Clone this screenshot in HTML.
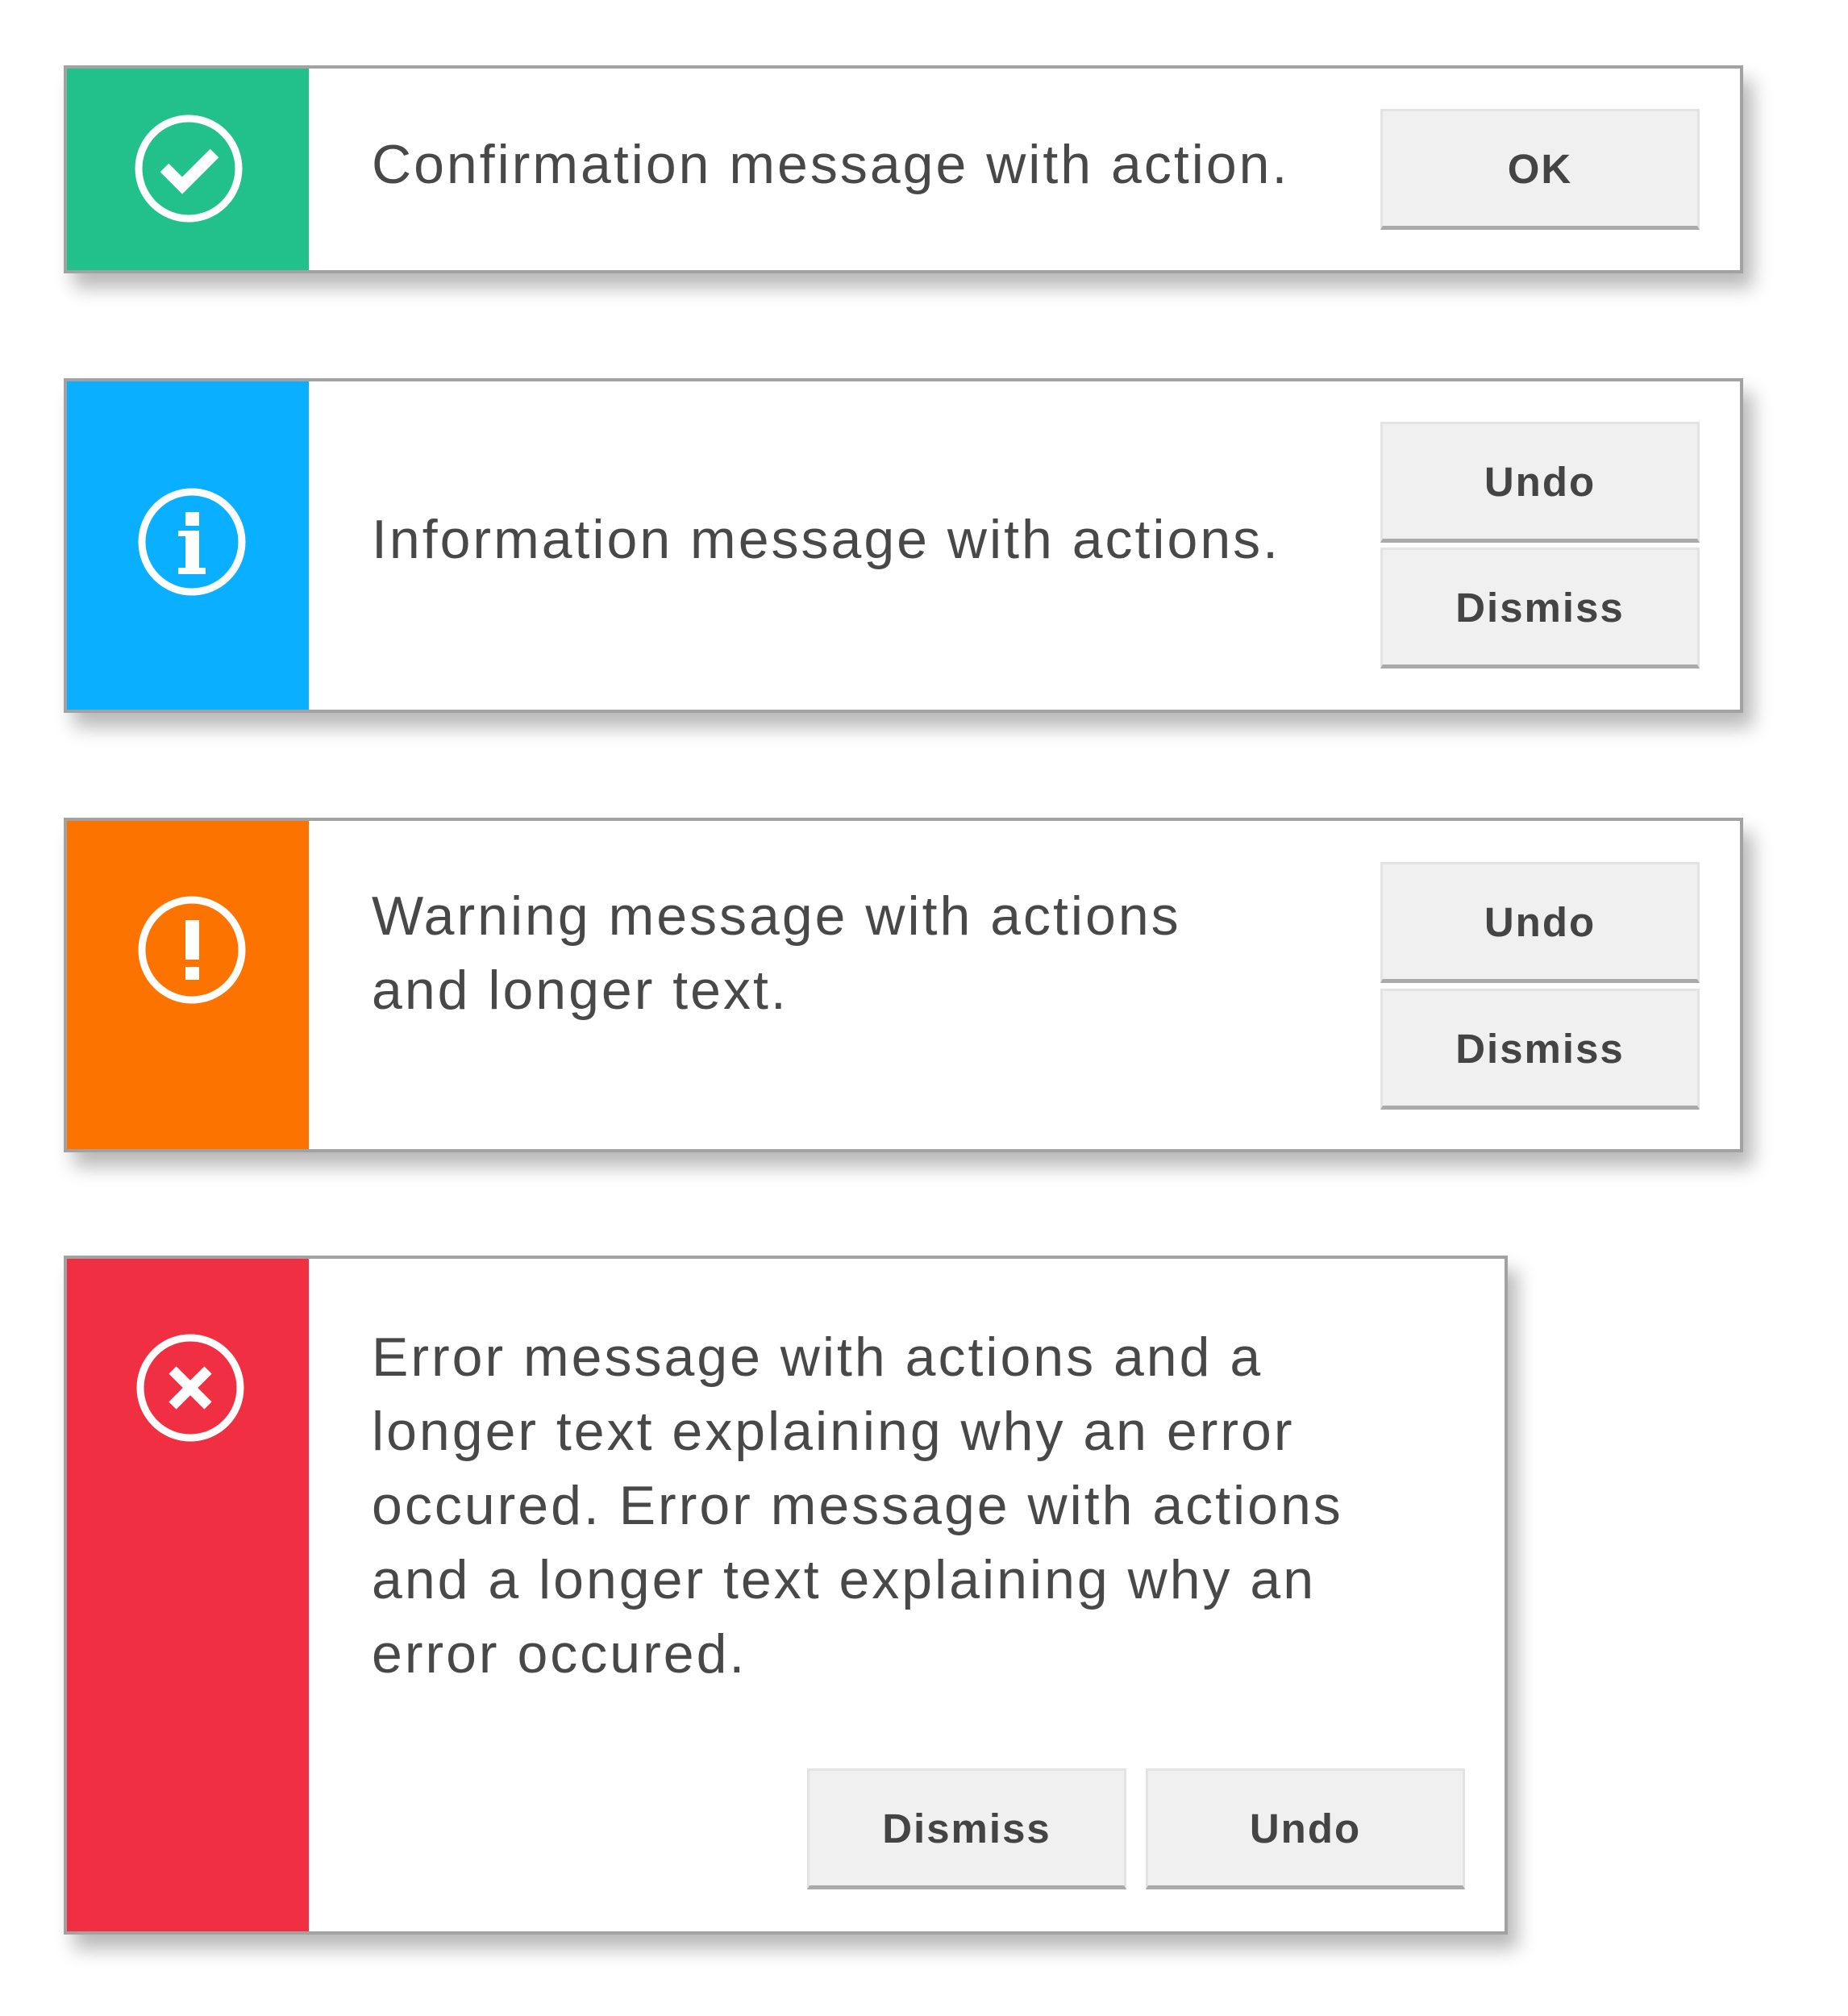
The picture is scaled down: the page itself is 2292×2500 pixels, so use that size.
<!DOCTYPE html>
<html><head><meta charset="utf-8"><style>
html,body{margin:0;padding:0;background:#fff;width:2292px;height:2500px;overflow:hidden}
.card{position:absolute;left:79px;width:2083px;box-sizing:border-box;border:4px solid #a2a2a2;background:#fff;box-shadow:12px 18px 22px rgba(0,0,0,0.28)}
.band{position:absolute;left:0;top:0;bottom:0;width:300px}
.txt{position:absolute;left:378px;font-family:"Liberation Sans",sans-serif;font-size:68px;line-height:92px;letter-spacing:3px;color:#484848;white-space:nowrap}
.btn{position:absolute;box-sizing:border-box;background:#f0f0f0;border:3px solid #e3e3e3;border-bottom:5px solid #aaa;display:flex;align-items:center;justify-content:center;font-family:"Liberation Sans",sans-serif;font-weight:bold;font-size:51px;letter-spacing:2px;color:#444;width:396px;height:150px}
svg{position:absolute}
</style></head><body>

<div class="card" style="top:81px;height:258px">
  <div class="band" style="background:#22c08a"></div>
  <svg style="left:81px;top:54px" width="140" height="140" viewBox="-70 -70 140 140"><circle r="62" fill="none" stroke="#fff" stroke-width="9"/><path d="M-30 -1 L-8 21 L32 -19" fill="none" stroke="#fff" stroke-width="15"/></svg>
  <div class="txt" style="top:73px">Confirmation message with action.</div>
  <div class="btn" style="left:1629px;top:50px">OK</div>
</div>

<div class="card" style="top:469px;height:415px">
  <div class="band" style="background:#0bafff"></div>
  <svg style="left:85px;top:129px" width="140" height="140" viewBox="-70 -70 140 140"><circle r="62" fill="none" stroke="#fff" stroke-width="9"/><rect x="-8" y="-37" width="17" height="17" fill="#fff"/><rect x="-8" y="-14" width="17" height="52" fill="#fff"/><rect x="-17" y="-14" width="12" height="7" fill="#fff"/><rect x="-17" y="32" width="34" height="8" fill="#fff"/></svg>
  <div class="txt" style="top:150px">Information message with actions.</div>
  <div class="btn" style="left:1629px;top:50px">Undo</div>
  <div class="btn" style="left:1629px;top:206px">Dismiss</div>
</div>

<div class="card" style="top:1014px;height:415px">
  <div class="band" style="background:#fc7300"></div>
  <svg style="left:85px;top:90px" width="140" height="140" viewBox="-70 -70 140 140"><circle r="62" fill="none" stroke="#fff" stroke-width="9"/><rect x="-8" y="-37" width="17" height="49" fill="#fff"/><rect x="-8" y="21" width="17" height="16" fill="#fff"/></svg>
  <div class="txt" style="top:72px">Warning message with actions<br>and longer text.</div>
  <div class="btn" style="left:1629px;top:51px">Undo</div>
  <div class="btn" style="left:1629px;top:208px">Dismiss</div>
</div>

<div class="card" style="top:1557px;height:842px;width:1791px">
  <div class="band" style="background:#f02f42"></div>
  <svg style="left:83px;top:90px" width="140" height="140" viewBox="-70 -70 140 140"><circle r="62" fill="none" stroke="#fff" stroke-width="9"/><path d="M-22 -22 L22 22 M22 -22 L-22 22" fill="none" stroke="#fff" stroke-width="13"/></svg>
  <div class="txt" style="top:76px">Error message with actions and a<br>longer text explaining why an error<br>occured. Error message with actions<br>and a longer text explaining why an<br>error occured.</div>
  <div class="btn" style="left:918px;top:632px">Dismiss</div>
  <div class="btn" style="left:1338px;top:632px">Undo</div>
</div>

</body></html>
